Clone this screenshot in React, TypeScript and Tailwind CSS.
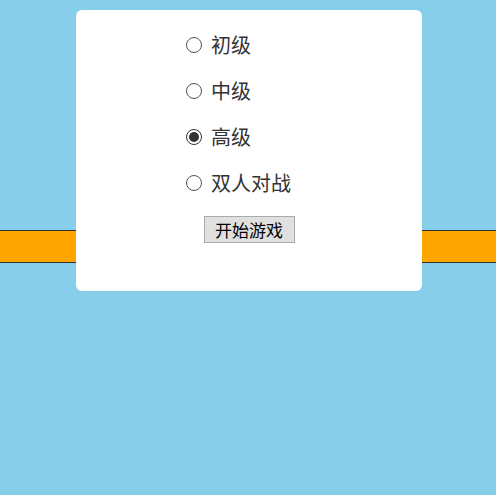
import React, { useState } from 'react';

const levels = ['初级', '中级', '高级', '双人对战'];

export default function App() {
  const [level, setLevel] = useState('高级');

  return (
    <div
      className="relative h-[495px] w-full overflow-hidden bg-[#87ceeb]"
      style={{ fontFamily: '"Noto Sans CJK SC", "Noto Sans", sans-serif' }}
    >
      {/* game track */}
      <div className="mt-[230px] h-[33px] w-full border-y border-[#333] bg-[#ffa500]" />

      {/* start dialog */}
      <div className="absolute left-[76px] top-[10px] flex h-[281px] w-[346px] flex-col items-center rounded-md bg-white pt-[12px]">
        <div className="w-[126px]">
          {levels.map(name => (
            <label key={name} className="flex h-[46px] cursor-pointer items-center text-[20px] text-[#333]">
              <input
                type="radio"
                name="level"
                className="sr-only"
                checked={level === name}
                onChange={() => setLevel(name)}
              />
              <span
                className={
                  level === name
                    ? 'flex h-[16px] w-[16px] items-center justify-center rounded-full border border-[#333]'
                    : 'flex h-[16px] w-[16px] items-center justify-center rounded-full border border-[#555]'
                }
              >
                {level === name && <span className="h-[10px] w-[10px] rounded-full bg-[#333]" />}
              </span>
              <span className="ml-[9px] whitespace-nowrap leading-none">{name}</span>
            </label>
          ))}
        </div>
        <button
          type="button"
          className="mt-[10px] h-[27px] w-[91px] border border-[#aaa] bg-[#e0e0e0] text-[17px] leading-none text-black"
        >
          开始游戏
        </button>
      </div>
    </div>
  );
}
